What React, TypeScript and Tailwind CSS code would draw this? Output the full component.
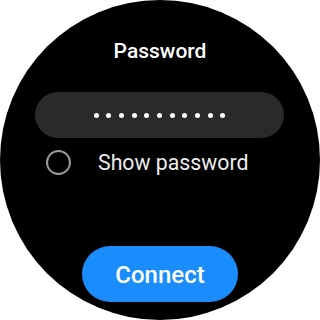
export default function App() {
  const dots = Array.from({ length: 11 });
  return (
    <div className="flex h-[320px] w-[320px] items-center justify-center bg-white font-['Roboto',sans-serif]">
      <div className="flex h-[320px] w-[320px] flex-col items-center overflow-hidden rounded-full bg-black pt-[39px] pb-[18px]">
        <h1 className="text-[21px] leading-[24px] font-medium text-white">Password</h1>

        <div className="mt-[29px] ml-[-1px] flex h-[46px] w-[249px] items-center justify-center gap-[7.7px] rounded-full bg-[#2a2a2a]">
          {dots.map((_, i) => (
            <span key={i} className="h-[5px] w-[5px] rounded-full bg-white" />
          ))}
        </div>

        <label className="mt-[11px] flex w-full items-center gap-[27px] pl-[46px]">
          <span className="h-[25px] w-[25px] rounded-full border-2 border-[#9a9a9a]" />
          <span className="pt-[2px] text-[21.3px] leading-[24px] text-[#ececec]">Show password</span>
        </label>

        <button className="mt-auto h-[56px] w-[156px] rounded-full bg-[#1a8cfc] pt-[2px] text-[24px] font-medium text-white">
          Connect
        </button>
      </div>
    </div>
  );
}
